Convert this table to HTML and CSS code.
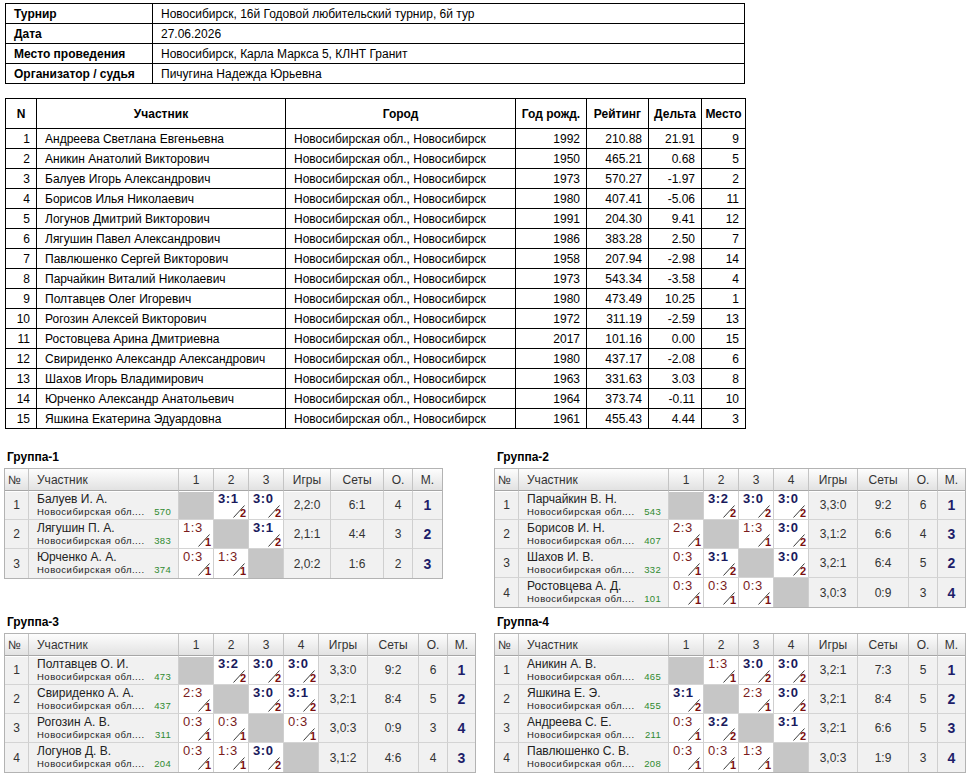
FILE: index.html
```html
<!DOCTYPE html>
<html lang="ru">
<head>
<meta charset="utf-8">
<title>Турнир</title>
<link rel="stylesheet" href="styles.css">
</head>
<body>
<div class="page">
  <table class="info">
    <colgroup><col class="c-label"><col></colgroup>
    <tr><td class="lbl">Турнир</td><td>Новосибирск, 16й Годовой любительский турнир, 6й тур</td></tr>
    <tr><td class="lbl">Дата</td><td>27.06.2026</td></tr>
    <tr><td class="lbl">Место проведения</td><td>Новосибирск, Карла Маркса 5, КЛНТ Гранит</td></tr>
    <tr><td class="lbl">Организатор / судья</td><td>Пичугина Надежда Юрьевна</td></tr>
  </table>

  <table class="main">
    <colgroup>
      <col class="m-n"><col class="m-name"><col class="m-city"><col class="m-year"><col class="m-rate"><col class="m-delta"><col class="m-place">
    </colgroup>
    <thead>
      <tr><th>N</th><th>Участник</th><th>Город</th><th>Год рожд.</th><th>Рейтинг</th><th>Дельта</th><th>Место</th></tr>
    </thead>
    <tbody>
      <tr><td class="r">1</td><td>Андреева Светлана Евгеньевна</td><td>Новосибирская обл., Новосибирск</td><td class="r">1992</td><td class="r">210.88</td><td class="r">21.91</td><td class="r">9</td></tr>
      <tr><td class="r">2</td><td>Аникин Анатолий Викторович</td><td>Новосибирская обл., Новосибирск</td><td class="r">1950</td><td class="r">465.21</td><td class="r">0.68</td><td class="r">5</td></tr>
      <tr><td class="r">3</td><td>Балуев Игорь Александрович</td><td>Новосибирская обл., Новосибирск</td><td class="r">1973</td><td class="r">570.27</td><td class="r">-1.97</td><td class="r">2</td></tr>
      <tr><td class="r">4</td><td>Борисов Илья Николаевич</td><td>Новосибирская обл., Новосибирск</td><td class="r">1980</td><td class="r">407.41</td><td class="r">-5.06</td><td class="r">11</td></tr>
      <tr><td class="r">5</td><td>Логунов Дмитрий Викторович</td><td>Новосибирская обл., Новосибирск</td><td class="r">1991</td><td class="r">204.30</td><td class="r">9.41</td><td class="r">12</td></tr>
      <tr><td class="r">6</td><td>Лягушин Павел Александрович</td><td>Новосибирская обл., Новосибирск</td><td class="r">1986</td><td class="r">383.28</td><td class="r">2.50</td><td class="r">7</td></tr>
      <tr><td class="r">7</td><td>Павлюшенко Сергей Викторович</td><td>Новосибирская обл., Новосибирск</td><td class="r">1958</td><td class="r">207.94</td><td class="r">-2.98</td><td class="r">14</td></tr>
      <tr><td class="r">8</td><td>Парчайкин Виталий Николаевич</td><td>Новосибирская обл., Новосибирск</td><td class="r">1973</td><td class="r">543.34</td><td class="r">-3.58</td><td class="r">4</td></tr>
      <tr><td class="r">9</td><td>Полтавцев Олег Игоревич</td><td>Новосибирская обл., Новосибирск</td><td class="r">1980</td><td class="r">473.49</td><td class="r">10.25</td><td class="r">1</td></tr>
      <tr><td class="r">10</td><td>Рогозин Алексей Викторович</td><td>Новосибирская обл., Новосибирск</td><td class="r">1972</td><td class="r">311.19</td><td class="r">-2.59</td><td class="r">13</td></tr>
      <tr><td class="r">11</td><td>Ростовцева Арина Дмитриевна</td><td>Новосибирская обл., Новосибирск</td><td class="r">2017</td><td class="r">101.16</td><td class="r">0.00</td><td class="r">15</td></tr>
      <tr><td class="r">12</td><td>Свириденко Александр Александрович</td><td>Новосибирская обл., Новосибирск</td><td class="r">1980</td><td class="r">437.17</td><td class="r">-2.08</td><td class="r">6</td></tr>
      <tr><td class="r">13</td><td>Шахов Игорь Владимирович</td><td>Новосибирская обл., Новосибирск</td><td class="r">1963</td><td class="r">331.63</td><td class="r">3.03</td><td class="r">8</td></tr>
      <tr><td class="r">14</td><td>Юрченко Александр Анатольевич</td><td>Новосибирская обл., Новосибирск</td><td class="r">1964</td><td class="r">373.74</td><td class="r">-0.11</td><td class="r">10</td></tr>
      <tr><td class="r">15</td><td>Яшкина Екатерина Эдуардовна</td><td>Новосибирская обл., Новосибирск</td><td class="r">1961</td><td class="r">455.43</td><td class="r">4.44</td><td class="r">3</td></tr>
    </tbody>
  </table>

  <div class="groups">
    <!-- Группа-1 -->
    <section class="group">
      <div class="gtitle">Группа-1</div>
      <table class="gt g3">
        <colgroup><col class="g-n"><col class="g-name"><col class="g-s"><col class="g-s"><col class="g-s"><col class="g-games3"><col class="g-sets3"><col class="g-o"><col class="g-m3"></colgroup>
        <thead><tr><th class="hn">№</th><th class="hname">Участник</th><th>1</th><th>2</th><th>3</th><th>Игры</th><th>Сеты</th><th>О.</th><th>М.</th></tr></thead>
        <tbody>
          <tr><td class="num">1</td><td class="pl"><div class="nm">Балуев И. А.</div><div class="sub"><span>Новосибирская обл....</span><span class="rt">570</span></div></td>
            <td class="self"></td>
            <td class="sc"><div class="scw"><span class="s win">3:1</span><span class="d"><svg class="sl" viewBox="0 0 12 13"><line x1="0.5" y1="12.5" x2="11.5" y2="0.5"/></svg><b>2</b></span></div></td>
            <td class="sc"><div class="scw"><span class="s win">3:0</span><span class="d"><svg class="sl" viewBox="0 0 12 13"><line x1="0.5" y1="12.5" x2="11.5" y2="0.5"/></svg><b>2</b></span></div></td>
            <td class="c">2,2:0</td><td class="c">6:1</td><td class="c">4</td><td class="mm">1</td></tr>
          <tr><td class="num">2</td><td class="pl"><div class="nm">Лягушин П. А.</div><div class="sub"><span>Новосибирская обл....</span><span class="rt">383</span></div></td>
            <td class="sc"><div class="scw"><span class="s loss">1:3</span><span class="d"><svg class="sl" viewBox="0 0 12 13"><line x1="0.5" y1="12.5" x2="11.5" y2="0.5"/></svg><b>1</b></span></div></td>
            <td class="self"></td>
            <td class="sc"><div class="scw"><span class="s win">3:1</span><span class="d"><svg class="sl" viewBox="0 0 12 13"><line x1="0.5" y1="12.5" x2="11.5" y2="0.5"/></svg><b>2</b></span></div></td>
            <td class="c">2,1:1</td><td class="c">4:4</td><td class="c">3</td><td class="mm">2</td></tr>
          <tr><td class="num">3</td><td class="pl"><div class="nm">Юрченко А. А.</div><div class="sub"><span>Новосибирская обл....</span><span class="rt">374</span></div></td>
            <td class="sc"><div class="scw"><span class="s loss">0:3</span><span class="d"><svg class="sl" viewBox="0 0 12 13"><line x1="0.5" y1="12.5" x2="11.5" y2="0.5"/></svg><b>1</b></span></div></td>
            <td class="sc"><div class="scw"><span class="s loss">1:3</span><span class="d"><svg class="sl" viewBox="0 0 12 13"><line x1="0.5" y1="12.5" x2="11.5" y2="0.5"/></svg><b>1</b></span></div></td>
            <td class="self"></td>
            <td class="c">2,0:2</td><td class="c">1:6</td><td class="c">2</td><td class="mm">3</td></tr>
        </tbody>
      </table>
    </section>

    <!-- Группа-2 -->
    <section class="group">
      <div class="gtitle">Группа-2</div>
      <table class="gt g4">
        <colgroup><col class="g-n"><col class="g-name"><col class="g-s"><col class="g-s"><col class="g-s"><col class="g-s"><col class="g-games"><col class="g-sets"><col class="g-o"><col class="g-m"></colgroup>
        <thead><tr><th class="hn">№</th><th class="hname">Участник</th><th>1</th><th>2</th><th>3</th><th>4</th><th>Игры</th><th>Сеты</th><th>О.</th><th>М.</th></tr></thead>
        <tbody>
          <tr><td class="num">1</td><td class="pl"><div class="nm">Парчайкин В. Н.</div><div class="sub"><span>Новосибирская обл....</span><span class="rt">543</span></div></td>
            <td class="self"></td>
            <td class="sc"><div class="scw"><span class="s win">3:2</span><span class="d"><svg class="sl" viewBox="0 0 12 13"><line x1="0.5" y1="12.5" x2="11.5" y2="0.5"/></svg><b>2</b></span></div></td>
            <td class="sc"><div class="scw"><span class="s win">3:0</span><span class="d"><svg class="sl" viewBox="0 0 12 13"><line x1="0.5" y1="12.5" x2="11.5" y2="0.5"/></svg><b>2</b></span></div></td>
            <td class="sc"><div class="scw"><span class="s win">3:0</span><span class="d"><svg class="sl" viewBox="0 0 12 13"><line x1="0.5" y1="12.5" x2="11.5" y2="0.5"/></svg><b>2</b></span></div></td>
            <td class="c">3,3:0</td><td class="c">9:2</td><td class="c">6</td><td class="mm">1</td></tr>
          <tr><td class="num">2</td><td class="pl"><div class="nm">Борисов И. Н.</div><div class="sub"><span>Новосибирская обл....</span><span class="rt">407</span></div></td>
            <td class="sc"><div class="scw"><span class="s loss">2:3</span><span class="d"><svg class="sl" viewBox="0 0 12 13"><line x1="0.5" y1="12.5" x2="11.5" y2="0.5"/></svg><b>1</b></span></div></td>
            <td class="self"></td>
            <td class="sc"><div class="scw"><span class="s loss">1:3</span><span class="d"><svg class="sl" viewBox="0 0 12 13"><line x1="0.5" y1="12.5" x2="11.5" y2="0.5"/></svg><b>1</b></span></div></td>
            <td class="sc"><div class="scw"><span class="s win">3:0</span><span class="d"><svg class="sl" viewBox="0 0 12 13"><line x1="0.5" y1="12.5" x2="11.5" y2="0.5"/></svg><b>2</b></span></div></td>
            <td class="c">3,1:2</td><td class="c">6:6</td><td class="c">4</td><td class="mm">3</td></tr>
          <tr><td class="num">3</td><td class="pl"><div class="nm">Шахов И. В.</div><div class="sub"><span>Новосибирская обл....</span><span class="rt">332</span></div></td>
            <td class="sc"><div class="scw"><span class="s loss">0:3</span><span class="d"><svg class="sl" viewBox="0 0 12 13"><line x1="0.5" y1="12.5" x2="11.5" y2="0.5"/></svg><b>1</b></span></div></td>
            <td class="sc"><div class="scw"><span class="s win">3:1</span><span class="d"><svg class="sl" viewBox="0 0 12 13"><line x1="0.5" y1="12.5" x2="11.5" y2="0.5"/></svg><b>2</b></span></div></td>
            <td class="self"></td>
            <td class="sc"><div class="scw"><span class="s win">3:0</span><span class="d"><svg class="sl" viewBox="0 0 12 13"><line x1="0.5" y1="12.5" x2="11.5" y2="0.5"/></svg><b>2</b></span></div></td>
            <td class="c">3,2:1</td><td class="c">6:4</td><td class="c">5</td><td class="mm">2</td></tr>
          <tr><td class="num">4</td><td class="pl"><div class="nm">Ростовцева А. Д.</div><div class="sub"><span>Новосибирская обл....</span><span class="rt">101</span></div></td>
            <td class="sc"><div class="scw"><span class="s loss">0:3</span><span class="d"><svg class="sl" viewBox="0 0 12 13"><line x1="0.5" y1="12.5" x2="11.5" y2="0.5"/></svg><b>1</b></span></div></td>
            <td class="sc"><div class="scw"><span class="s loss">0:3</span><span class="d"><svg class="sl" viewBox="0 0 12 13"><line x1="0.5" y1="12.5" x2="11.5" y2="0.5"/></svg><b>1</b></span></div></td>
            <td class="sc"><div class="scw"><span class="s loss">0:3</span><span class="d"><svg class="sl" viewBox="0 0 12 13"><line x1="0.5" y1="12.5" x2="11.5" y2="0.5"/></svg><b>1</b></span></div></td>
            <td class="self"></td>
            <td class="c">3,0:3</td><td class="c">0:9</td><td class="c">3</td><td class="mm">4</td></tr>
        </tbody>
      </table>
    </section>

    <!-- Группа-3 -->
    <section class="group">
      <div class="gtitle">Группа-3</div>
      <table class="gt g4">
        <colgroup><col class="g-n"><col class="g-name"><col class="g-s"><col class="g-s"><col class="g-s"><col class="g-s"><col class="g-games"><col class="g-sets"><col class="g-o"><col class="g-m"></colgroup>
        <thead><tr><th class="hn">№</th><th class="hname">Участник</th><th>1</th><th>2</th><th>3</th><th>4</th><th>Игры</th><th>Сеты</th><th>О.</th><th>М.</th></tr></thead>
        <tbody>
          <tr><td class="num">1</td><td class="pl"><div class="nm">Полтавцев О. И.</div><div class="sub"><span>Новосибирская обл....</span><span class="rt">473</span></div></td>
            <td class="self"></td>
            <td class="sc"><div class="scw"><span class="s win">3:2</span><span class="d"><svg class="sl" viewBox="0 0 12 13"><line x1="0.5" y1="12.5" x2="11.5" y2="0.5"/></svg><b>2</b></span></div></td>
            <td class="sc"><div class="scw"><span class="s win">3:0</span><span class="d"><svg class="sl" viewBox="0 0 12 13"><line x1="0.5" y1="12.5" x2="11.5" y2="0.5"/></svg><b>2</b></span></div></td>
            <td class="sc"><div class="scw"><span class="s win">3:0</span><span class="d"><svg class="sl" viewBox="0 0 12 13"><line x1="0.5" y1="12.5" x2="11.5" y2="0.5"/></svg><b>2</b></span></div></td>
            <td class="c">3,3:0</td><td class="c">9:2</td><td class="c">6</td><td class="mm">1</td></tr>
          <tr><td class="num">2</td><td class="pl"><div class="nm">Свириденко А. А.</div><div class="sub"><span>Новосибирская обл....</span><span class="rt">437</span></div></td>
            <td class="sc"><div class="scw"><span class="s loss">2:3</span><span class="d"><svg class="sl" viewBox="0 0 12 13"><line x1="0.5" y1="12.5" x2="11.5" y2="0.5"/></svg><b>1</b></span></div></td>
            <td class="self"></td>
            <td class="sc"><div class="scw"><span class="s win">3:0</span><span class="d"><svg class="sl" viewBox="0 0 12 13"><line x1="0.5" y1="12.5" x2="11.5" y2="0.5"/></svg><b>2</b></span></div></td>
            <td class="sc"><div class="scw"><span class="s win">3:1</span><span class="d"><svg class="sl" viewBox="0 0 12 13"><line x1="0.5" y1="12.5" x2="11.5" y2="0.5"/></svg><b>2</b></span></div></td>
            <td class="c">3,2:1</td><td class="c">8:4</td><td class="c">5</td><td class="mm">2</td></tr>
          <tr><td class="num">3</td><td class="pl"><div class="nm">Рогозин А. В.</div><div class="sub"><span>Новосибирская обл....</span><span class="rt">311</span></div></td>
            <td class="sc"><div class="scw"><span class="s loss">0:3</span><span class="d"><svg class="sl" viewBox="0 0 12 13"><line x1="0.5" y1="12.5" x2="11.5" y2="0.5"/></svg><b>1</b></span></div></td>
            <td class="sc"><div class="scw"><span class="s loss">0:3</span><span class="d"><svg class="sl" viewBox="0 0 12 13"><line x1="0.5" y1="12.5" x2="11.5" y2="0.5"/></svg><b>1</b></span></div></td>
            <td class="self"></td>
            <td class="sc"><div class="scw"><span class="s loss">0:3</span><span class="d"><svg class="sl" viewBox="0 0 12 13"><line x1="0.5" y1="12.5" x2="11.5" y2="0.5"/></svg><b>1</b></span></div></td>
            <td class="c">3,0:3</td><td class="c">0:9</td><td class="c">3</td><td class="mm">4</td></tr>
          <tr><td class="num">4</td><td class="pl"><div class="nm">Логунов Д. В.</div><div class="sub"><span>Новосибирская обл....</span><span class="rt">204</span></div></td>
            <td class="sc"><div class="scw"><span class="s loss">0:3</span><span class="d"><svg class="sl" viewBox="0 0 12 13"><line x1="0.5" y1="12.5" x2="11.5" y2="0.5"/></svg><b>1</b></span></div></td>
            <td class="sc"><div class="scw"><span class="s loss">1:3</span><span class="d"><svg class="sl" viewBox="0 0 12 13"><line x1="0.5" y1="12.5" x2="11.5" y2="0.5"/></svg><b>1</b></span></div></td>
            <td class="sc"><div class="scw"><span class="s win">3:0</span><span class="d"><svg class="sl" viewBox="0 0 12 13"><line x1="0.5" y1="12.5" x2="11.5" y2="0.5"/></svg><b>2</b></span></div></td>
            <td class="self"></td>
            <td class="c">3,1:2</td><td class="c">4:6</td><td class="c">4</td><td class="mm">3</td></tr>
        </tbody>
      </table>
    </section>

    <!-- Группа-4 -->
    <section class="group">
      <div class="gtitle">Группа-4</div>
      <table class="gt g4">
        <colgroup><col class="g-n"><col class="g-name"><col class="g-s"><col class="g-s"><col class="g-s"><col class="g-s"><col class="g-games"><col class="g-sets"><col class="g-o"><col class="g-m"></colgroup>
        <thead><tr><th class="hn">№</th><th class="hname">Участник</th><th>1</th><th>2</th><th>3</th><th>4</th><th>Игры</th><th>Сеты</th><th>О.</th><th>М.</th></tr></thead>
        <tbody>
          <tr><td class="num">1</td><td class="pl"><div class="nm">Аникин А. В.</div><div class="sub"><span>Новосибирская обл....</span><span class="rt">465</span></div></td>
            <td class="self"></td>
            <td class="sc"><div class="scw"><span class="s loss">1:3</span><span class="d"><svg class="sl" viewBox="0 0 12 13"><line x1="0.5" y1="12.5" x2="11.5" y2="0.5"/></svg><b>1</b></span></div></td>
            <td class="sc"><div class="scw"><span class="s win">3:0</span><span class="d"><svg class="sl" viewBox="0 0 12 13"><line x1="0.5" y1="12.5" x2="11.5" y2="0.5"/></svg><b>2</b></span></div></td>
            <td class="sc"><div class="scw"><span class="s win">3:0</span><span class="d"><svg class="sl" viewBox="0 0 12 13"><line x1="0.5" y1="12.5" x2="11.5" y2="0.5"/></svg><b>2</b></span></div></td>
            <td class="c">3,2:1</td><td class="c">7:3</td><td class="c">5</td><td class="mm">1</td></tr>
          <tr><td class="num">2</td><td class="pl"><div class="nm">Яшкина Е. Э.</div><div class="sub"><span>Новосибирская обл....</span><span class="rt">455</span></div></td>
            <td class="sc"><div class="scw"><span class="s win">3:1</span><span class="d"><svg class="sl" viewBox="0 0 12 13"><line x1="0.5" y1="12.5" x2="11.5" y2="0.5"/></svg><b>2</b></span></div></td>
            <td class="self"></td>
            <td class="sc"><div class="scw"><span class="s loss">2:3</span><span class="d"><svg class="sl" viewBox="0 0 12 13"><line x1="0.5" y1="12.5" x2="11.5" y2="0.5"/></svg><b>1</b></span></div></td>
            <td class="sc"><div class="scw"><span class="s win">3:0</span><span class="d"><svg class="sl" viewBox="0 0 12 13"><line x1="0.5" y1="12.5" x2="11.5" y2="0.5"/></svg><b>2</b></span></div></td>
            <td class="c">3,2:1</td><td class="c">8:4</td><td class="c">5</td><td class="mm">2</td></tr>
          <tr><td class="num">3</td><td class="pl"><div class="nm">Андреева С. Е.</div><div class="sub"><span>Новосибирская обл....</span><span class="rt">211</span></div></td>
            <td class="sc"><div class="scw"><span class="s loss">0:3</span><span class="d"><svg class="sl" viewBox="0 0 12 13"><line x1="0.5" y1="12.5" x2="11.5" y2="0.5"/></svg><b>1</b></span></div></td>
            <td class="sc"><div class="scw"><span class="s win">3:2</span><span class="d"><svg class="sl" viewBox="0 0 12 13"><line x1="0.5" y1="12.5" x2="11.5" y2="0.5"/></svg><b>2</b></span></div></td>
            <td class="self"></td>
            <td class="sc"><div class="scw"><span class="s win">3:1</span><span class="d"><svg class="sl" viewBox="0 0 12 13"><line x1="0.5" y1="12.5" x2="11.5" y2="0.5"/></svg><b>2</b></span></div></td>
            <td class="c">3,2:1</td><td class="c">6:6</td><td class="c">5</td><td class="mm">3</td></tr>
          <tr><td class="num">4</td><td class="pl"><div class="nm">Павлюшенко С. В.</div><div class="sub"><span>Новосибирская обл....</span><span class="rt">208</span></div></td>
            <td class="sc"><div class="scw"><span class="s loss">0:3</span><span class="d"><svg class="sl" viewBox="0 0 12 13"><line x1="0.5" y1="12.5" x2="11.5" y2="0.5"/></svg><b>1</b></span></div></td>
            <td class="sc"><div class="scw"><span class="s loss">0:3</span><span class="d"><svg class="sl" viewBox="0 0 12 13"><line x1="0.5" y1="12.5" x2="11.5" y2="0.5"/></svg><b>1</b></span></div></td>
            <td class="sc"><div class="scw"><span class="s loss">1:3</span><span class="d"><svg class="sl" viewBox="0 0 12 13"><line x1="0.5" y1="12.5" x2="11.5" y2="0.5"/></svg><b>1</b></span></div></td>
            <td class="self"></td>
            <td class="c">3,0:3</td><td class="c">1:9</td><td class="c">3</td><td class="mm">4</td></tr>
        </tbody>
      </table>
    </section>
  </div>
</div>
</body>
</html>
```

FILE: styles.css
```css
* { box-sizing: border-box; }

html, body {
  margin: 0;
  padding: 0;
  background: #ffffff;
}

body {
  font-family: "Liberation Sans", Arial, sans-serif;
  font-size: 12px;
  color: #000;
}

.page {
  padding: 3px 0 0 5px;
}

/* ---------- info table ---------- */
.info {
  border-collapse: collapse;
  width: 740px;
  table-layout: fixed;
}
.info .c-label { width: 147px; }
.info td {
  border: 1px solid #000;
  height: 20px;
  padding: 0 8px;
  line-height: 14px;
  white-space: nowrap;
}
.info td.lbl { font-weight: bold; }

/* ---------- main table ---------- */
.main {
  border-collapse: collapse;
  width: 740px;
  table-layout: fixed;
  margin-top: 14px;
}
.main .m-n { width: 31px; }
.main .m-name { width: 249px; }
.main .m-city { width: 230px; }
.main .m-year { width: 71px; }
.main .m-rate { width: 62px; }
.main .m-delta { width: 53px; }
.main .m-place { width: 44px; }

.main th, .main td {
  border: 1px solid #000;
  padding: 0 6px 0 8px;
  line-height: 14px;
  white-space: nowrap;
}
.main th {
  height: 30px;
  font-weight: bold;
  text-align: center;
  padding: 0 2px;
}
.main td { height: 20px; }
.main td.r { text-align: right; padding: 0 6px 0 2px; }

/* ---------- groups ---------- */
.groups {
  margin: 21px 0 0 -1px;
  display: grid;
  grid-template-columns: 471px 471px;
  column-gap: 19px;
  row-gap: 7px;
  align-items: start;
}

.gtitle {
  font-weight: bold;
  font-size: 12px;
  line-height: 14px;
  padding-left: 3px;
  margin-bottom: 4px;
}

.gt {
  border-collapse: separate;
  border-spacing: 0;
  table-layout: fixed;
  border: 1px solid #b3b3b3;
  color: #222;
}
.gt.g4 { width: 471px; }
.gt.g3 { width: 439px; }

.gt .g-n { width: 24px; }
.gt .g-name { width: 150px; }
.gt .g-s { width: 35px; }
.gt .g-games { width: 49px; }
.gt .g-sets { width: 51px; }
.gt .g-o { width: 29px; }
.gt .g-m { width: 27px; }
.gt .g-games3 { width: 47px; }
.gt .g-sets3 { width: 53px; }
.gt .g-m3 { width: 29px; }

.gt th, .gt td {
  padding: 0;
  border-right: 1px solid #cfcfcf;
  border-bottom: 1px solid #d4d4d4;
}
.gt th:last-child, .gt td:last-child { border-right: none; }
.gt tbody tr:last-child td { border-bottom: none; }

.gt th {
  height: 22px;
  font-weight: normal;
  font-size: 12px;
  color: #333;
  text-align: center;
  background: linear-gradient(#fdfdfd, #e2e2e2);
  border-bottom: 1px solid #a6a6a6;
  border-right-color: #c4c4c4;
}
.gt th.hn { text-align: left; padding-left: 3px; }
.gt th.hname { text-align: left; padding-left: 8px; }

.gt td {
  height: 29px;
  background: #f1f1f1;
  vertical-align: middle;
}
.gt tbody tr:first-child td { box-shadow: inset 0 1px 0 #ffffff; }

.gt td.num, .gt td.c {
  text-align: center;
  font-size: 12px;
  color: #333;
}
.gt td.mm {
  text-align: center;
  font-weight: bold;
  font-size: 14px;
  color: #1e1e6a;
}

.gt td.pl { padding: 1px 7px 0 8px; vertical-align: top; }
.nm {
  font-size: 12px;
  line-height: 14px;
  color: #222;
  white-space: nowrap;
}
.sub {
  display: flex;
  justify-content: space-between;
  font-size: 9.5px;
  line-height: 11px;
  letter-spacing: 0.5px;
  color: #222;
  white-space: nowrap;
}
.sub .rt { color: #2f8a2f; letter-spacing: 0.3px; }

.gt td.self { background: #c6c6c6; box-shadow: none; }
.gt td.sc { background: #ffffff; vertical-align: top; }

.scw {
  height: 28px;
  display: flex;
  flex-direction: column;
  padding: 2px 2px 3px 4px;
}
.scw .s {
  align-self: flex-start;
  font-size: 13px;
  line-height: 12px;
  letter-spacing: 0.6px;
}
.scw .s.win { font-weight: bold; color: #1a1a5c; }
.scw .s.loss { font-weight: normal; color: #7a1c1c; }

.scw .d {
  margin-top: auto;
  align-self: flex-end;
  display: flex;
  align-items: flex-end;
}
.sl {
  width: 12px;
  height: 13px;
  margin-right: -5px;
  stroke: #3a3a3a;
  stroke-width: 1;
  fill: none;
  display: block;
}
.scw .d b {
  font-size: 11px;
  line-height: 8px;
  font-weight: bold;
  color: #7a1010;
  padding-bottom: 1px;
}
```
